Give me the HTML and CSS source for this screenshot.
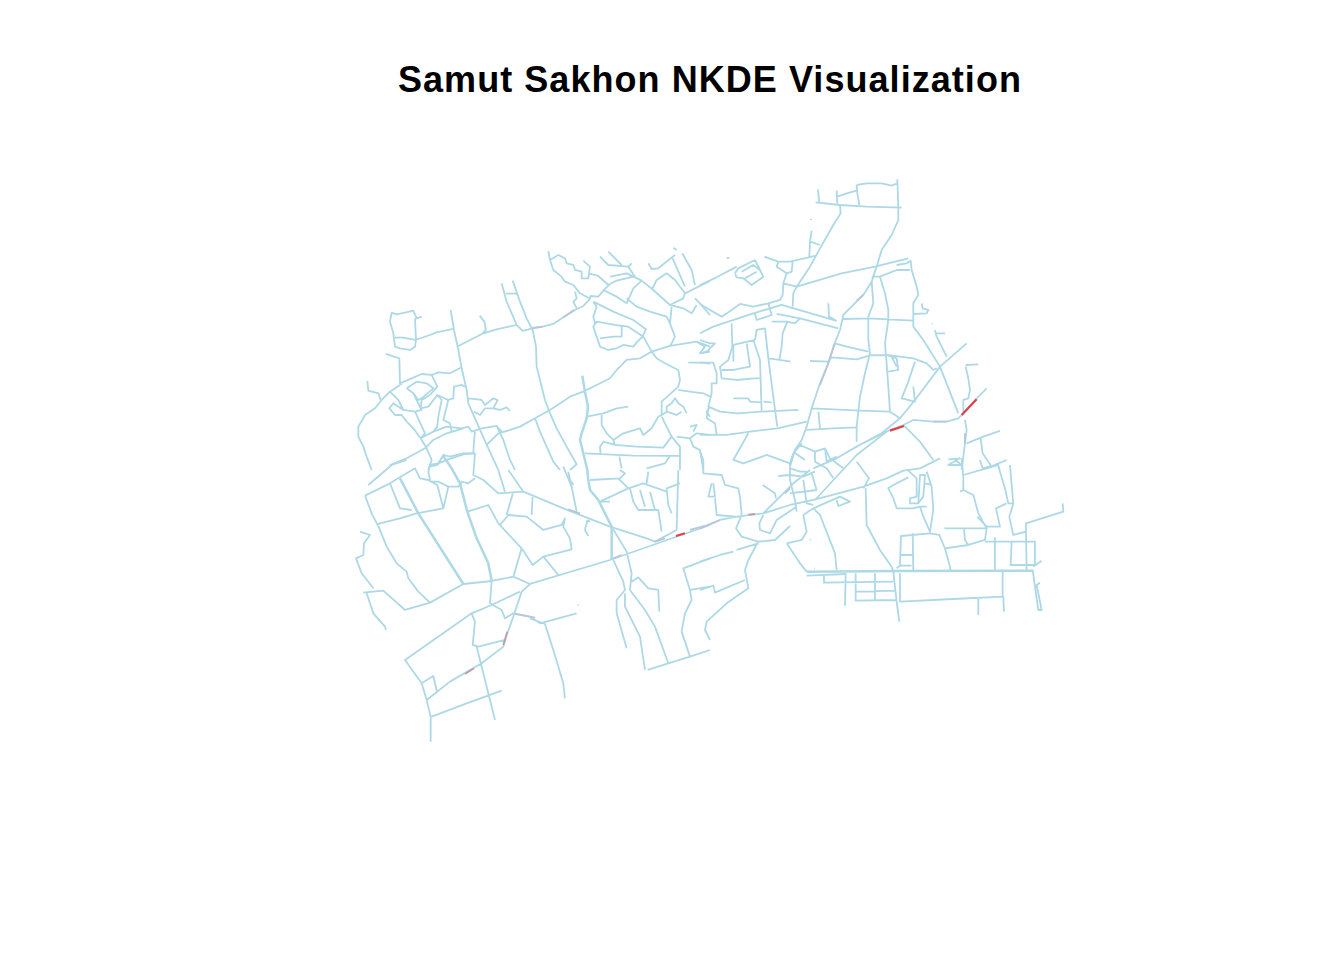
FILE: index.html
```html
<!DOCTYPE html>
<html lang="en">
<head>
    <meta charset="UTF-8">
    <title>Samut Sakhon NKDE Visualization</title>
    <link rel="stylesheet" href="styles.css">
</head>
<body>
    <main class="plot">
        <h1 class="plot-title">Samut Sakhon NKDE Visualization</h1>
        <svg class="map" viewBox="0 120 1344 840" role="img" aria-label="Road network density map">
            <!-- north west -->
            <g class="tile" transform="translate(350 170) scale(.3333)">
                <path class="road" d="M215 440 200 445 190 422 165 428 140 433 125 428 120 455 130 490 135 530 150 535 180 540 195 530 198 510 195 445
                M135 503 160 503 195 510 240 495 260 487 310 477
                M302 420 312 480 325 540 335 595 350 660 355 700 375 745 395 790 415 835 445 900
                M325 528 360 510 400 490 440 478 500 465 518 483 548 475 578 470 610 462 640 442 675 420 700 408 718 390 722 378 745 380 760 362 780 342 800 332 850 320 875 332 910 360 960 405 1000 385 1005 370 1080 333
                M389 437 403 455 408 480 398 490
                M455 340 470 395 485 430 500 465
                M468 371 500 371
                M488 332 510 395 530 445 548 480 558 530 560 590 570 630 585 690 600 730 620 775 650 830 680 883 660 900
                M107 552 148 565 150 640 155 645
                M150 645 120 665 95 690 75 715 45 735 40 745 25 770 25 800 40 830 50 860 65 900
                M52 633 55 662 85 670 92 690
                M150 640 185 625 215 612 245 615 265 607 300 610 335 592
                M120 665 145 690 160 720 130 700 118 715 135 735 155 735 170 755 190 775 212 805 250 785 290 770 335 775 355 770 365 785 395 775 440 768 455 785
                M170 655 200 635 230 640 250 655 215 685 205 690 190 670 170 655
                M245 615 262 650 240 675 215 690 212 715 235 710 262 675 275 690 265 740 262 770 250 785
                M190 670 215 720 195 725 160 720
                M195 725 225 790 212 805 230 835 245 870 235 900
                M262 675 295 690 310 685 312 650 335 645 345 650
                M295 690 280 750 300 760 305 785
                M355 685 395 690 405 705 430 685 443 690 430 715 405 715 390 735 372 725
                M430 715 450 720 470 712 480 723
                M120 885 170 865 225 835 250 810 290 790 340 775
                M372 815 375 785
                M372 815 370 850 340 850 300 860 280 855 262 885 240 890
                M410 825 445 790 480 780 510 770 555 745 600 720 660 680 700 665 740 645 780 625 800 600 830 570 870 565 905 545 960 528 1040 515 1080 530
                M555 745 570 785 590 830 610 875 630 900
                M440 768 460 810 480 870 495 900
                M755 735 755 765 770 790 790 810 820 790 870 775 880 795 905 775 925 740 935 735 935 695 985 650 990 630 985 600 945 580 920 565 905 545 880 500 835 470 795 465 740 455 730 470 740 500 750 530 775 540 800 535 820 525 850 530 862 515 880 498
                M710 740 760 730 800 715 835 710
                M750 505 790 500 815 500 815 470
                M730 395 740 410 730 440 735 460
                M730 395 790 425 850 450 888 478 878 498
                M790 810 795 825 860 830 940 833 965 800 935 740
                M965 800 990 830 990 900
                M795 825 760 815 750 830 752 850
                M705 850 850 857 990 858
                M808 860 815 895
                M980 800 1020 805 1040 790 1080 795
                M1020 805 1030 830 1050 840 1060 900
                M1020 770 1040 765 1030 785
                M890 895 945 880 960 858
                M935 735 950 725 950 710 965 700 975 685 985 700 1000 710 1010 730
                M950 725 980 735 995 725
                M985 660 1020 665 1060 670 1080 680
                M1080 710 1070 725 1080 740
                M1015 578 1060 578 1080 582
                M1040 515 1065 530 1050 550 1080 545
                M595 243 600 270 625 255 645 265 650 280 670 285 675 300 695 305 695 325 715 325 720 290 700 272
                M600 270 610 300 635 320 645 335 670 345 690 370 718 385
                M715 310 745 318 775 345
                M675 365 680 385 670 395 680 415
                M750 260 775 285 835 290 845 280
                M775 245 815 285
                M835 290 855 320
                M780 320 830 310 850 320
                M875 332 850 355 830 400 800 380 760 360
                M830 385 860 410 900 425 950 440 960 460 965 410
                M960 460 975 500 960 530
                M895 280 905 297 925 295 975 255
                M970 233 980 240
                M905 360 920 330 950 310 975 330 1005 370
                M968 265 1005 350
                M997 250 1025 300 1035 345
                M1035 385 1050 400 1080 435
                M960 405 1000 415 1025 430 1040 405" />
                <path class="road-thick" d="M697 617 705 665 714 710 710 745 695 790 690 810 700 850 712 900" />
                <path class="heat-low" d="M548 474 578 470 M640 442 672 420" />
            </g>

            <!-- north east -->
            <g class="tile" transform="translate(700 170) scale(.3333)">
                <path class="road" d="M592 28 595 110 595 150 575 195 545 240 530 290 515 335 490 375 430 435 420 480 400 530 385 580 360 640 335 715 320 770 305 810 285 840 270 890
                M470 45 500 40 545 40 575 47 592 40
                M470 45 472 70 478 105
                M347 97 420 105 500 110 605 113
                M354 58 358 97
                M410 62 412 100
                M412 80 440 70 470 62
                M420 105 422 130 400 165 360 235 330 290 290 350
                M333 146 333 150
                M335 182 330 215 328 260
                M330 215 360 225
                M193 260 235 275 270 275 345 258
                M235 275 230 290 260 310 275 305 278 275
                M260 310 250 340 248 375 240 390 205 400 160 410 120 402 95 420 65 440 30 420 0 402
                M290 350 425 310 525 290 625 265
                M250 340 290 350 280 370 278 410
                M515 320 540 320 590 300 630 300
                M590 285 620 280 632 272 635 300 650 350 655 375 640 400 640 470 670 510 720 590 775 730
                M515 335 520 400 505 440 505 510 510 550 495 610 480 680 470 770 470 815
                M540 320 555 370 565 420 565 450 555 520 560 580 565 650 570 725
                M430 447 505 445 640 452
                M385 400 387 440 410 453
                M0 490 40 470 160 430 245 405 410 453
                M230 432 300 445 415 475
                M205 400 215 435 170 450 165 430
                M165 510 170 480 195 475 205 565 225 720 232 770
                M215 455 260 455 285 460 300 445
                M262 455 248 490 245 530 238 570 272 575
                M205 565 238 570
                M330 573 385 575 395 562 470 568 510 556 560 555 640 565 680 580 700 600 710 595
                M405 520 440 530 505 545
                M560 555 590 565 595 600 565 605
                M575 560 590 590
                M645 575 625 635 605 685 645 695 640 650
                M800 520 720 590 645 690 600 745 545 790 470 830 410 865 340 895
                M860 655 830 685 790 730 775 745 740 755 700 755 640 750 610 765 570 780 490 820
                M610 765 660 815 700 870
                M795 750 800 780 795 820 790 860 785 900
                M800 820 850 800 900 783
                M842 805 848 850 875 890
                M797 585 835 583
                M797 590 805 625 810 660 805 685 790 690 790 730
                M705 480 710 500 740 560
                M705 490 735 490
                M665 400 668 415 685 420 680 430 640 432
                M696 460 698 462
                M0 345 50 322 110 290
                M105 310 115 295 165 270
                M105 310 110 322 130 325 155 345 190 320 165 270
                M125 305 160 285 185 305
                M135 325 170 305
                M80 265 88 263
                M0 510 30 520 45 520 20 545 0 550
                M95 460 97 530 85 570 60 590 65 625 110 630 165 625 180 625
                M165 510 100 525 100 575
                M140 520 150 590 100 600 65 600
                M160 510 180 570 185 725
                M0 578 40 578 50 610 50 640 35 640 35 670 25 710 60 725 110 730 185 725 295 720
                M25 715 20 745 45 760 50 795
                M0 795 80 795 150 785 232 775 320 755
                M100 685 145 685 150 695 185 697
                M190 695 215 697
                M335 715 480 722 570 725 600 745
                M355 725 360 775
                M320 780 400 775 470 772
                M145 790 100 870 130 880 200 855 270 880" />
                <path class="heat-low" d="M490 375 470 392 M405 520 385 580 360 645 M700 755 740 755 M795 790 795 820" />
                <path class="heat-high" d="M570 782 612 768 M785 735 830 688" />
            </g>

            <!-- south west -->
            <g class="tile" transform="translate(350 450) scale(.3333)">
                <path class="road" d="M30 245 60 255 42 280 40 315 18 325 35 370 70 415
                M40 428 100 422 165 480 240 458 340 402 425 393 490 380 540 402 780 330 1080 225
                M50 430 70 490 105 530 108 540
                M45 137 65 190 88 235 110 290 140 340 170 365 175 385 205 425 240 458
                M45 137 120 100 195 55 210 85 235 90 262 105 280 175 200 190 150 205 90 220 80 225
                M120 100 150 175 185 180
                M240 90 235 65 240 45 265 40 280 18
                M55 105 125 45 170 30
                M265 40 295 28 345 12 375 10 370 75 400 90 445 130 520 125 640 175 780 230 890 265 915 275 980 240 985 60
                M375 85 355 100 335 95 325 110 295 110 280 175
                M240 95 265 95 295 110
                M352 185 415 165 445 220 515 295 548 345 580 320 665 298 660 265 640 230 645 205 635 225 580 240 530 200 475 195 450 225
                M490 125 470 195
                M548 135 545 195
                M580 320 625 375
                M515 295 490 380
                M445 60 465 125
                M475 60 520 125
                M640 50 665 110 680 185
                M655 65 660 90 670 105
                M785 230 830 305 845 370 840 420 885 480 915 530 955 640
                M790 330 820 395 825 420 800 450 800 490 830 595
                M825 430 825 470 870 560 885 660
                M845 395 865 382 895 415 925 420 928 485
                M893 660 955 640 1020 620 1080 600
                M1020 620 995 545 1005 490 1025 450 1020 420 1000 355 1080 325
                M1020 420 1080 410
                M810 60 825 70 810 85 720 90
                M805 85 835 115 880 100 950 125
                M990 100 950 115 955 165 965 190
                M895 65 890 100
                M835 115 750 155 780 155
                M840 115 850 155 865 180 925 180 935 245
                M870 120 885 170
                M900 125 915 180
                M712 210 705 240 715 258
                M712 210 720 215
                M425 393 420 460 455 480 465 505 490 490
                M510 425 425 465 365 490 165 630 215 700 230 750 242 800 242 875
                M540 402 515 425 490 500 470 555 460 590 395 640 300 695 230 750
                M365 490 375 515 368 585 385 590 465 570
                M380 590 395 650 415 730 435 810
                M245 800 350 760 455 722
                M215 700 250 678 262 730
                M490 490 540 500 570 520 680 490
                M540 505 585 522 610 600 640 700 645 745
                M684 464 686 466" />
                <path class="road-thick" d="M150 85 205 190 340 402 M280 18 305 55 330 100 352 185 380 265 415 340 425 393 M712 60 715 90 720 120 745 150 785 230 785 330" />
                <path class="heat-low" d="M655 178 690 190 M790 325 815 315 M1020 240 1065 228 M915 275 945 265 M495 492 555 503" />
                <path class="heat-mid" d="M345 672 372 655 M472 545 460 585" />
                <path class="heat-high" d="M978 258 1005 250" />
            </g>

            <!-- south east -->
            <g class="tile" transform="translate(700 400) scale(.3333)">
                <path class="road" d="M0 385 60 360 110 350 190 340 280 250 330 210
                M190 340 270 315 340 300 415 280 490 260 560 235 610 212 660 205 720 175
                M345 300 470 165 560 95
                M470 185 507 235 490 265
                M305 130 280 160 270 190 270 240 285 300 290 335
                M280 155 315 180
                M300 135 345 155 375 145 390 175 430 205
                M345 155 345 185 380 205 400 235
                M375 145 380 185 410 170
                M235 228 270 225 310 230 345 215
                M270 205 300 215 320 215
                M310 240 320 310 340 315
                M335 220 350 270
                M270 280 350 270
                M188 255 225 280 228 295
                M0 155 10 180 10 220 65 225 75 255 115 265 120 290 125 345
                M35 250 25 290 45 290 40 250
                M45 295 50 345 105 350
                M125 345 108 385 125 410 175 425 225 420 270 378
                M190 345 178 370 180 390 210 400 230 360 290 320
                M175 425 145 480 135 510 145 565 80 610 20 665 15 690 30 720
                M0 485 60 465 100 455
                M110 450 175 430
                M0 570 40 557 45 578 135 540
                M260 430 300 490 320 515
                M310 345 320 395 305 420 260 430
                M310 345 340 325 360 345 405 460 410 510
                M340 325 420 290 450 305 415 318 410 300
                M497 265 500 375 540 450 575 500 580 515
                M320 527 440 522
                M372 527 372 548 580 545
                M437 522 435 617
                M467 520 467 602 590 600
                M525 520 525 600
                M467 575 585 572
                M580 515 590 605 598 665
                M600 520 600 605 760 597 910 590 912 635
                M835 595 835 645
                M908 515 908 590
                M590 505 600 497 635 497
                M600 497 603 408 690 400 718 405 735 445 750 500 752 512
                M638 400 640 510
                M603 465 640 465
                M625 232 580 255 565 265 580 295 590 325 640 325 660 320 670 350 690 395 700 330 695 260 680 215
                M625 212 650 235 650 290 630 295 630 310 655 310 660 225 675 225 670 290 655 310
                M675 250 695 255
                M660 320 680 320
                M785 175 790 230 790 270 820 285 835 340 860 385 855 420 805 435 735 445
                M745 178 780 175 745 195 785 195 765 180
                M790 225 860 205 920 180
                M860 205 895 195 900 215 915 265 925 310 940 310 930 195
                M780 275 790 270
                M920 310 888 325 900 380 860 380 832 350
                M733 385 860 385
                M792 388 795 420 805 435
                M940 310 928 350 940 405 978 395 978 370 1090 335 1088 310
                M855 425 1005 425 1005 495
                M885 412 885 510
                M935 425 932 495 1005 495
                M978 395 980 510
                M998 510 1005 560 1015 630 1025 630 1010 555 1020 548
                M1000 500 1025 482
                M840 180 848 205 875 198
                M330 418 332 420
                M342 505 344 505" />
                <path class="road-thick" d="M320 515 590 513 1000 512" />
                <path class="heat-low" d="M0 385 60 360 M270 265 255 280" />
                <path class="heat-mid" d="M145 344 165 342" />
            </g>
        </svg>
    </main>
</body>
</html>
```

FILE: styles.css
```css
body {
    margin: 0;
    background-color: #ffffff;
    font-family: "Liberation Sans", Arial, sans-serif;
}

.plot {
    width: 1344px;
    height: 960px;
    overflow: hidden;
}

.plot-title {
    height: 120px;
    margin: 0;
    padding: 59px 0 0 76px;
    box-sizing: border-box;
    text-align: center;
    font-size: 36px;
    line-height: 42px;
    letter-spacing: 1.05px;
    font-weight: bold;
    color: #000000;
}

.map {
    display: block;
    width: 1344px;
    height: 840px;
}

.tile path {
    fill: none;
    stroke-linejoin: round;
}

.road {
    stroke: #add8e6;
    stroke-width: 5.4;
}

.road-thick {
    stroke: #add8e6;
    stroke-width: 7.5;
}

.heat-low {
    stroke: #b9c6d8;
    stroke-width: 5.4;
}

.heat-mid {
    stroke: #c49aa8;
    stroke-width: 5.4;
}

.heat-high {
    stroke: #e0404c;
    stroke-width: 6.5;
}
```
